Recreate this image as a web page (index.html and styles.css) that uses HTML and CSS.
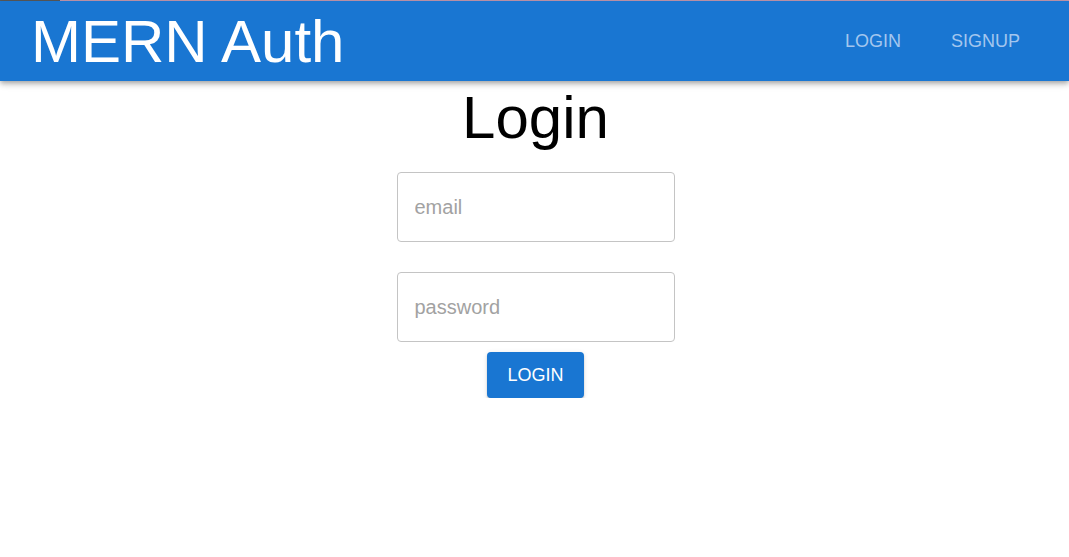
FILE: index.html
```html
<!DOCTYPE html>
<html lang="en">
<head>
<meta charset="utf-8">
<title>MERN Auth</title>
<link rel="stylesheet" href="styles.css">
</head>
<body>
<div class="topline"></div>
<header class="appbar">
  <div class="brand">MERN Auth</div>
  <nav class="nav">
    <a class="nav-btn" href="#">LOGIN</a>
    <a class="nav-btn" href="#">SIGNUP</a>
  </nav>
</header>
<main class="page">
  <h1 class="title">Login</h1>
  <form class="form">
    <input class="field" type="email" placeholder="email">
    <input class="field field-pass" type="password" placeholder="password">
    <button class="submit" type="button">LOGIN</button>
  </form>
</main>
</body>
</html>
```
FILE: styles.css
```css
html, body {
  margin: 0;
  padding: 0;
  background: #fff;
  font-family: "Liberation Sans", Arial, sans-serif;
}

.topline {
  height: 1px;
  background: linear-gradient(to right, #5a5a5a 0, #5a5a5a 60px, #c49ab0 60px);
}

.appbar {
  position: relative;
  z-index: 1;
  height: 80px;
  background: #1976d2;
  display: flex;
  align-items: center;
  justify-content: space-between;
  padding: 0 24px 0 31px;
  box-shadow: 0 2px 4px -1px rgba(0,0,0,.2), 0 4px 5px 0 rgba(0,0,0,.14), 0 1px 10px 0 rgba(0,0,0,.12);
}

.brand {
  color: #fff;
  font-size: 60px;
  line-height: 67px;
}

.nav {
  display: flex;
  align-items: center;
}

.nav-btn {
  color: #a4c6ee;
  text-decoration: none;
  font-size: 18px;
  line-height: 36px;
  padding: 0 25px;
}

.page {
  display: flex;
  flex-direction: column;
  align-items: center;
  padding-left: 2px;
}

.title {
  margin: 4px 0 0;
  font-size: 60px;
  font-weight: normal;
  line-height: 65px;
  color: #000;
}

.form {
  display: flex;
  flex-direction: column;
  align-items: center;
  margin-top: 22px;
}

.field {
  box-sizing: border-box;
  width: 278px;
  height: 70px;
  border: 1px solid #c4c4c4;
  border-radius: 4px;
  padding: 0 17px;
  font-family: "Liberation Sans", Arial, sans-serif;
  font-size: 20px;
  color: #222;
  outline: none;
}

.field::placeholder {
  color: #a2a2a2;
}

.field-pass {
  margin-top: 30px;
}

.submit {
  margin-top: 10px;
  height: 46px;
  padding: 0 20px;
  border: none;
  border-radius: 4px;
  background: #1976d2;
  color: #fff;
  font-family: "Liberation Sans", Arial, sans-serif;
  font-size: 18px;
  box-shadow: 0 3px 1px -2px rgba(0,0,0,.2), 0 2px 2px 0 rgba(0,0,0,.14), 0 1px 5px 0 rgba(0,0,0,.12);
}
```
